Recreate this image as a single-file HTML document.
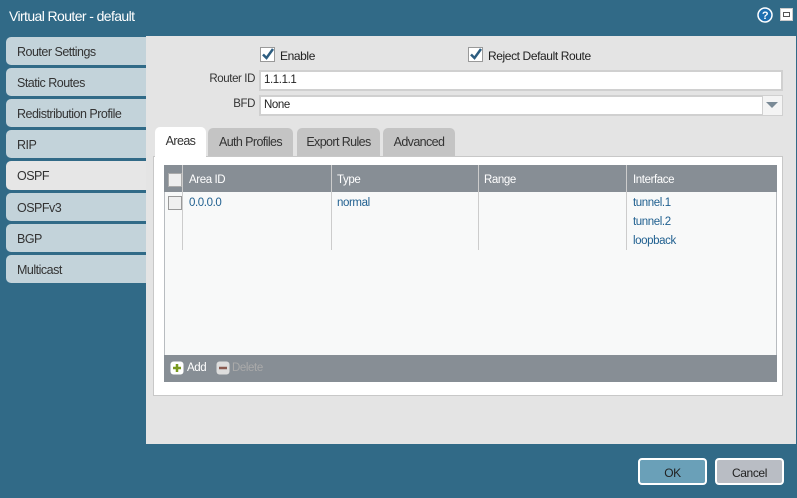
<!DOCTYPE html>
<html><head><style>
*{box-sizing:border-box;margin:0;padding:0}
body{width:797px;height:498px;background:#316a87;font-family:"Liberation Sans",sans-serif;font-size:12px;color:#222;position:relative;overflow:hidden;letter-spacing:-0.4px}
.a{position:absolute}
.title{left:9px;top:8px;color:#fff;font-size:14px;letter-spacing:-0.6px}
.nav{left:6px;width:140px;height:28px;background:#c3d3da;border-radius:5px 0 0 5px;padding:8px 0 0 11px;font-size:12.5px;color:#333;letter-spacing:-0.5px}
.nav.sel{background:#e6e6e6}
.panel{left:146px;top:36px;width:650px;height:408px;background:#e4e4e4}
.cb{width:14px;height:14px;border:1px solid #999;background:#fff}
.inp{background:#fff;border:2px solid #d0d0d0;height:21px;padding:2px 3px;font-size:11.5px}
.tab{top:128px;height:28px;background:#c4c4c4;border-radius:5px 5px 0 0;padding:7px 0 0 0;text-align:center;font-size:12.5px;color:#333;letter-spacing:-0.6px}
.hd{color:#fff;font-size:11.5px;top:174px}
.lnk{color:#1f5f8f;font-size:11.5px}
.btn{top:458px;width:69px;height:27px;border:2px solid #fff;border-radius:4px;text-align:center;padding-top:6px;font-size:12px;color:#222}
.lbl{text-align:right;width:80px;color:#333;font-size:11.5px}
</style></head><body>
<div class="a title">Virtual Router - default</div>
<svg class="a" style="left:757px;top:7px" width="16" height="16"><circle cx="8" cy="8" r="7" fill="#1e6fb0" stroke="#fff" stroke-width="1.5"/><text x="8" y="12" font-size="11" font-weight="bold" fill="#fff" text-anchor="middle" font-family="Liberation Sans">?</text></svg>
<div class="a" style="left:780px;top:8px;width:13px;height:13px;background:#fff;border:1px solid #ccc"><div style="margin:3px 2px;height:5px;border:1px solid #555"></div></div>
<div class="a panel"></div>
<div class="a nav" style="top:37px">Router Settings</div>
<div class="a nav" style="top:68px">Static Routes</div>
<div class="a nav" style="top:99px">Redistribution Profile</div>
<div class="a nav" style="top:130px">RIP</div>
<div class="a nav sel" style="top:161px;height:29px">OSPF</div>
<div class="a nav" style="top:193px">OSPFv3</div>
<div class="a nav" style="top:224px">BGP</div>
<div class="a nav" style="top:255px">Multicast</div>

<svg class="a" style="left:260px;top:47px" width="15" height="15"><rect x="0.5" y="0.5" width="14" height="14" fill="#fff" stroke="#999"/><path d="M3 7.5 L6.5 11 L13 2" stroke="#2d5d80" stroke-width="2.5" fill="none"/></svg>
<div class="a" style="left:280px;top:49px">Enable</div>
<svg class="a" style="left:468px;top:47px" width="15" height="15"><rect x="0.5" y="0.5" width="14" height="14" fill="#fff" stroke="#999"/><path d="M3 7.5 L6.5 11 L13 2" stroke="#2d5d80" stroke-width="2.5" fill="none"/></svg>
<div class="a" style="left:488px;top:49px">Reject Default Route</div>
<div class="a lbl" style="left:175px;top:73px">Router ID</div>
<div class="a inp" style="left:259px;top:70px;width:524px">1.1.1.1</div>
<div class="a lbl" style="left:175px;top:98px">BFD</div>
<div class="a inp" style="left:259px;top:95px;width:524px">None</div>
<div class="a" style="left:762px;top:96px;width:20px;height:19px;border-left:1px solid #d0d0d0;background:#f4f4f4"></div>
<svg class="a" style="left:766px;top:102px" width="12" height="7"><path d="M0 0H12L6 6Z" fill="#7a8a96"/></svg>

<div class="a" style="left:153px;top:156px;width:630px;height:240px;background:#fff;border:1px solid #c8c8c8"></div>
<div class="a tab" style="left:155px;width:51px;background:#fff;top:127px;height:30px">Areas</div>
<div class="a tab" style="left:208px;width:85px">Auth Profiles</div>
<div class="a tab" style="left:297px;width:83px">Export Rules</div>
<div class="a tab" style="left:383px;width:72px">Advanced</div>

<div class="a" style="left:164px;top:165px;width:613px;height:217px;background:#f8f9f9;border:1px solid #b8bcc0"></div>
<div class="a" style="left:164px;top:165px;width:613px;height:27px;background:#878e95"></div>
<div class="a cb" style="left:168px;top:173px;border-color:#aaa;background:#eee"></div>
<div class="a" style="left:182px;top:165px;width:1px;height:85px;background:#ccc"></div>
<div class="a" style="left:331px;top:165px;width:1px;height:85px;background:#ccc"></div>
<div class="a" style="left:478px;top:165px;width:1px;height:85px;background:#ccc"></div>
<div class="a" style="left:626px;top:165px;width:1px;height:85px;background:#ccc"></div>
<div class="a hd" style="left:189px">Area ID</div>
<div class="a hd" style="left:337px">Type</div>
<div class="a hd" style="left:484px">Range</div>
<div class="a hd" style="left:633px">Interface</div>
<div class="a cb" style="left:168px;top:196px;background:#f0f0f0"></div>
<div class="a lnk" style="left:189px;top:197px">0.0.0.0</div>
<div class="a lnk" style="left:337px;top:197px">normal</div>
<div class="a lnk" style="left:633px;top:197px">tunnel.1</div>
<div class="a lnk" style="left:633px;top:216px">tunnel.2</div>
<div class="a lnk" style="left:633px;top:235px">loopback</div>
<div class="a" style="left:164px;top:355px;width:613px;height:27px;background:#878e95"></div>
<svg class="a" style="left:170px;top:361px" width="14" height="14"><rect x="0.5" y="0.5" width="13" height="13" rx="3" fill="#fff"/><path d="M7 3V11M3 7H11" stroke="#7a9a20" stroke-width="2.5"/></svg>
<div class="a" style="left:187px;top:362px;color:#fff;font-size:11.5px">Add</div>
<svg class="a" style="left:216px;top:361px" width="14" height="14"><rect x="0.5" y="0.5" width="13" height="13" rx="3" fill="#ddd"/><path d="M3 7H11" stroke="#8a5a50" stroke-width="2.5"/></svg>
<div class="a" style="left:232px;top:362px;color:#aaa;font-size:11.5px">Delete</div>

<div class="a btn" style="left:638px;background:#6aa0b8">OK</div>
<div class="a btn" style="left:715px;background:#b9bdc4">Cancel</div>
</body></html>
